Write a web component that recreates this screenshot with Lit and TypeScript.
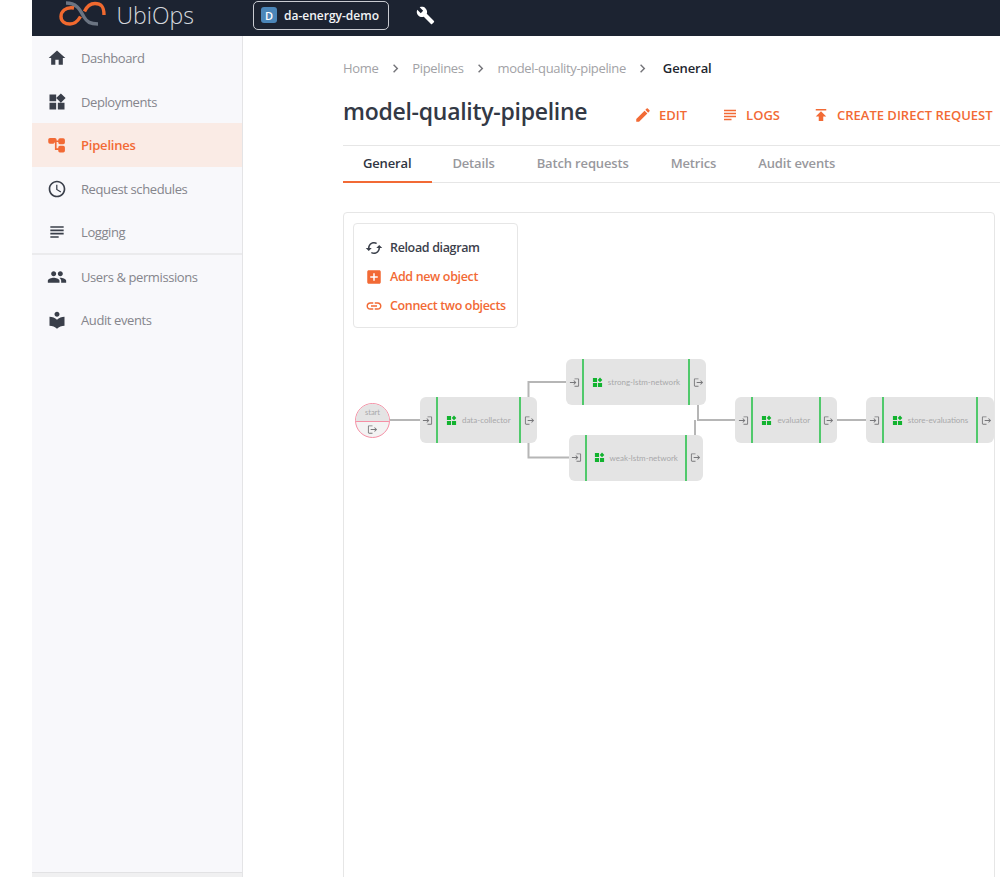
import { LitElement, html, css, svg } from "lit";
import { customElement } from "lit/decorators.js";

const P = {
  home: "M10 20v-6h4v6h5v-8h3L12 3 2 12h3v8z",
  deploy: "M13 13v8h8v-8h-8zM3 21h8v-8H3v8zM3 3v8h8V3H3zm13.66-1.31L11 7.34 16.66 13l5.66-5.66-5.66-5.65z",
  clock: "M11.99 2C6.47 2 2 6.48 2 12s4.47 10 9.99 10C17.52 22 22 17.52 22 12S17.52 2 11.99 2zM12 20c-4.42 0-8-3.58-8-8s3.58-8 8-8 8 3.58 8 8-3.58 8-8 8zm.5-13H11v6l5.25 3.15.75-1.23-4.5-2.67z",
  log: "M14 17H4v2h10v-2zm6-8H4v2h16V9zM4 15h16v-2H4v2zM4 5v2h16V5H4z",
  users: "M16 11c1.66 0 2.99-1.34 2.99-3S17.66 5 16 5c-1.66 0-3 1.34-3 3s1.34 3 3 3zm-8 0c1.66 0 2.99-1.34 2.99-3S9.66 5 8 5C6.34 5 5 6.34 5 8s1.34 3 3 3zm0 2c-2.33 0-7 1.17-7 3.5V19h14v-2.5c0-2.33-4.67-3.5-7-3.5zm8 0c-.29 0-.62.02-.97.05 1.16.84 1.97 1.97 1.97 3.45V19h6v-2.5c0-2.33-4.67-3.5-7-3.5z",
  audit: "M12 11.55C9.64 9.35 6.48 8 3 8v11c3.48 0 6.64 1.35 9 3.55 2.36-2.19 5.52-3.55 9-3.55V8c-3.48 0-6.64 1.35-9 3.55zM12 8c1.66 0 3-1.34 3-3s-1.34-3-3-3-3 1.34-3 3 1.34 3 3 3z",
  pipe: "M3.5 3.5h6a2 2 0 0 1 2 2v1h2v-.5a2 2 0 0 1 2-2h4a2 2 0 0 1 2 2v3a2 2 0 0 1-2 2h-4a2 2 0 0 1-2-2v-.5h-2v7.5h2v-1a2 2 0 0 1 2-2h4a2 2 0 0 1 2 2v4a2 2 0 0 1-2 2h-4a2 2 0 0 1-2-2v-1h-4V9h-.5a2 2 0 0 1-2 1.5h-3.5a2 2 0 0 1-2-2v-3a2 2 0 0 1 2-2z",
  edit: "M3 17.25V21h3.75L17.81 9.94l-3.75-3.75L3 17.25zM20.71 7.04c.39-.39.39-1.02 0-1.41l-2.34-2.34c-.39-.39-1.02-.39-1.41 0l-1.83 1.83 3.75 3.75 1.83-1.83z",
  publish: "M5 4v2h14V4H5zm0 10h4v6h6v-6h4l-7-7-7 7z",
  wrench: "M22.7 19l-9.1-9.1c.9-2.3.4-5-1.5-6.9-2-2-5-2.4-7.4-1.3L9 6 6 9 1.6 4.7C.4 7.1.9 10.1 2.9 12.1c1.9 1.9 4.6 2.4 6.9 1.5l9.1 9.1c.4.4 1 .4 1.4 0l2.3-2.3c.5-.4.5-1.1.1-1.4z",
  cached: "M19 8l-4 4h3c0 3.31-2.69 6-6 6-1.01 0-1.97-.25-2.8-.7l-1.46 1.46C8.97 19.54 10.43 20 12 20c4.42 0 8-3.58 8-8h3l-4-4zM6 12c0-3.31 2.69-6 6-6 1.01 0 1.97.25 2.8.7l1.46-1.46C15.03 4.46 13.57 4 12 4c-4.42 0-8 3.58-8 8H1l4 4 4-4H6z",
  add: "M19 3H5c-1.11 0-2 .9-2 2v14c0 1.1.89 2 2 2h14c1.1 0 2-.9 2-2V5c0-1.1-.9-2-2-2zm-2 10h-4v4h-2v-4H7v-2h4V7h2v4h4v2z",
  link: "M3.9 12c0-1.71 1.39-3.1 3.1-3.1h4V7H7c-2.76 0-5 2.24-5 5s2.24 5 5 5h4v-1.9H7c-1.71 0-3.1-1.39-3.1-3.1zM8 13h8v-2H8v2zm9-6h-4v1.9h4c1.71 0 3.1 1.39 3.1 3.1s-1.39 3.1-3.1 3.1h-4V17h4c2.76 0 5-2.24 5-5s-2.24-5-5-5z",
  chev: "M10 6L8.59 7.41 13.17 12l-4.58 4.59L10 18l6-6z",
  login: "M11 7L9.6 8.4l2.6 2.6H2v2h10.2l-2.6 2.6L11 17l5-5-5-5zm9 12h-8v2h8c1.1 0 2-.9 2-2V5c0-1.1-.9-2-2-2h-8v2h8v14z",
  logout: "M17 7l-1.41 1.41L18.17 11H8v2h10.17l-2.58 2.58L17 17l5-5zM4 5h8V3H4c-1.1 0-2 .9-2 2v14c0 1.1.9 2 2 2h8v-2H4V5z",
};

const icon = (d: string, cls = "") =>
  html`<svg class="ic ${cls}" viewBox="0 0 24 24" aria-hidden="true"><path d=${d} fill="currentColor"></path></svg>`;

const NAV_TOP = [
  { label: "Dashboard", d: P.home },
  { label: "Deployments", d: P.deploy },
  { label: "Pipelines", d: P.pipe, active: true },
  { label: "Request schedules", d: P.clock },
  { label: "Logging", d: P.log },
];
const NAV_BOTTOM = [
  { label: "Users & permissions", d: P.users },
  { label: "Audit events", d: P.audit },
];

const OX = 344;
const OY = 213;
const NODES = [
  { name: "data-collector", x: 419.5, y: 397, w: 117.5 },
  { name: "strong-lstm-network", x: 566, y: 359, w: 140 },
  { name: "weak-lstm-network", x: 568.5, y: 434.5, w: 134.5 },
  { name: "evaluator", x: 735, y: 397, w: 101.5 },
  { name: "store-evaluations", x: 866, y: 397, w: 128 },
];
const WIRES = [
  "M390 420H420",
  "M528.5 397V382H566",
  "M528.5 443V457.5H569",
  "M698 405V420H735",
  "M695 435V420",
  "M836 420H866",
];

@customElement("app-root")
export class AppRoot extends LitElement {
  static styles = css`
    :host {
      display: block;
      width: 1000px;
      height: 877px;
      overflow: hidden;
      background: #fff;
      font-family: "Open Sans", "Noto Sans", sans-serif;
      color: #2f3542;
    }
    .ic { width: 20px; height: 20px; display: block; flex: none; }
    .shell { display: grid; grid-template-columns: 1fr; height: 877px; margin-left: 32px; grid-template-rows: 36px 1fr; }
    .top { background: #1c2331; display: flex; align-items: center; color: #fff; }
    .logo { width: 50px; height: 36px; margin-left: 27px; display: block; }
    .brand { font-weight: 300; font-size: 23px; line-height: 26px; color: #d5d8de; margin: -6px 0 0 7.5px; width: 136.5px; }
    .ws { height: 29px; width: 136px; box-sizing: border-box; border: 1px solid #c8cbd1; border-radius: 5px; display: flex; align-items: center; padding-left: 7px; gap: 7px; font-size: 12px; font-weight: 600; margin-top: -6px; color: #f2f3f5; }
    .ws b { width: 16px; height: 16px; border-radius: 3px; background: #4b86b8; display: grid; place-items: center; font-size: 11px; font-weight: 600; color: #fff; }
    .wrench { width: 19px; height: 19px; margin-left: 27px; margin-top: -6px; color: #fff; }
    .wrench .ic { width: 19px; height: 19px; }
    .body { display: flex; min-height: 0; }
    .side { width: 211px; flex: none; box-sizing: border-box; background: #f8f8fb; border-right: 1px solid #e4e4e6; display: flex; flex-direction: column; }
    .foot { margin-top: auto; height: 4px; border-top: 1px solid #e2e2e4; background: #f0f0f1; }
    .nav { display: flex; flex-direction: column; }
    .nav + .nav { border-top: 2px solid #ebebed; margin-top: -1px; }
    .row { height: 43.5px; box-sizing: border-box; padding-top: 1px; display: flex; align-items: center; padding-left: 15px; gap: 14px; font-size: 13px; letter-spacing: -0.4px; color: #85858c; }
    .row .ic { color: #3a3f4a; }
    .row.on { background: #faebe5; color: #f26a35; font-weight: 600; letter-spacing: -0.2px; }
    .row.on .ic { color: #f26a35; }
    .main { flex: 1; min-width: 0; padding-left: 100px; }
    .crumbs { height: 64px; display: flex; align-items: center; font-size: 13px; letter-spacing: -0.35px; color: #a2a2a6; }
    .crumbs .ic { width: 17px; height: 17px; color: #75757a; margin: 0 8.5px; }
    .crumbs .cur { color: #22262e; font-weight: 600; letter-spacing: -0.1px; margin-left: 3px; }
    .head { height: 49px; display: flex; align-items: flex-start; margin-top: -4px; }
    h1 { margin: -1px 0 0; font-size: 23px; font-weight: 600; color: #333945; width: 291px; white-space: nowrap; letter-spacing: -0.27px; }
    .act { display: flex; align-items: center; color: #f26a35; font-size: 13px; font-weight: 600; gap: 7px; margin-top: 9.5px; text-transform: uppercase; white-space: nowrap; }
    .act .ic { width: 18px; height: 18px; }
    .act.edit { margin-right: 34px; }
    .act.logs { margin-right: 32px; }
    .tabs { height: 38px; box-sizing: border-box; border-top: 1px solid #e6e6e6; border-bottom: 1px solid #e6e6e6; display: flex; font-size: 13px; font-weight: 600; letter-spacing: -0.15px; color: #98989d; }
    .tab { padding: 0 21px 2px; display: flex; align-items: center; margin-bottom: -1px; border-bottom: 2px solid transparent; white-space: nowrap; }
    .tab.on { color: #2f3542; border-bottom-color: #f26a35; padding: 0 21px 2px 20px; margin-right: -1px; }
    .canvas { position: relative; margin-top: 29px; width: 652px; height: 700px; box-sizing: border-box; border: 1px solid #e6e6e6; border-radius: 4px; padding: 10px 9px; }
    .tools { width: 165px; height: 105px; box-sizing: border-box; border: 1px solid #e6e6e6; border-radius: 4px; background: #fff; padding: 11px 11px 9px; display: flex; flex-direction: column; justify-content: center; gap: 10px; font-size: 12.5px; font-weight: 600; letter-spacing: -0.35px; color: #f26a35; }
    .tool { display: flex; align-items: center; gap: 7px; height: 19px; white-space: nowrap; }
    .tool .ic { width: 18px; height: 18px; }
    .tool.dark { color: #3b404b; }
    .wires { position: absolute; left: 0; top: 0; width: 656px; height: 300px; overflow: visible; }
    .node { position: absolute; height: 46px; box-sizing: border-box; background: #e4e4e4; border-radius: 6px; display: flex; align-items: center; }
    .port { width: 16px; flex: none; height: 100%; display: grid; place-items: center; color: #77777a; }
    .port .ic { width: 11px; height: 11px; }
    .mid { flex: 1; min-width: 0; height: 100%; border-left: 2px solid #50c96b; border-right: 2px solid #50c96b; display: flex; align-items: center; justify-content: center; gap: 5px; font-family: Lato, sans-serif; font-weight: 400; font-size: 8px; color: #a8a8aa; white-space: nowrap; box-sizing: border-box; }
    .mid svg { width: 11px; height: 11px; flex: none; color: #12b32f; }
    .start { position: absolute; width: 35px; height: 35px; box-sizing: border-box; border: 1px solid #f590a5; border-radius: 50%; overflow: hidden; display: flex; flex-direction: column; background: #f3f3f3; }
    .start .a { height: 18px; box-sizing: border-box; background: #e4e4e4; border-bottom: 1.5px solid #f590a5; font-family: Lato, sans-serif; font-weight: 400; font-size: 7.5px; color: #a8a8aa; display: grid; place-items: center; }
    .start .b { flex: 1; display: grid; place-items: center; color: #77777a; }
    .start .b .ic { width: 11px; height: 11px; }
  `;

  private logo() {
    return html`<svg class="logo" viewBox="60 0 50 36" aria-hidden="true">
      <path d="M67 3C78 3 81 10 85 17C88 22 91 24 99 24" fill="none" stroke="#6b7482" stroke-width="3.4"></path>
      <path d="M75 8C66 6.5 62 12 62 16.5C62 21.5 66 24 71 24C77 24 79.5 20 81.5 16.5" fill="none" stroke="#f0692f" stroke-width="3.4"></path>
      <path d="M85.5 11.5C88 6 92 3.5 96 3.5C102 3.5 105 6 105 15" fill="none" stroke="#f0692f" stroke-width="3.4"></path>
    </svg>`;
  }

  private blocks() {
    return svg`<svg viewBox="0 0 24 24" aria-hidden="true"><path fill="currentColor" d=${"M13 13v9h9v-9h-9zM2 22h9v-9H2v9zM2 2v9h9V2H2zm15.5-1L12.5 6.5l5 5 5-5-5-5.5z"}></path></svg>`;
  }

  render() {
    return html`
      <div class="shell">
        <header class="top">
          ${this.logo()}
          <div class="brand">UbiOps</div>
          <div class="ws"><b>D</b>da-energy-demo</div>
          <div class="wrench">${icon(P.wrench)}</div>
        </header>
        <div class="body">
          <aside class="side">
            <nav class="nav">${NAV_TOP.map(n => html`<div class="row ${n.active ? "on" : ""}">${icon(n.d)}<span>${n.label}</span></div>`)}</nav>
            <nav class="nav">${NAV_BOTTOM.map(n => html`<div class="row">${icon(n.d)}<span>${n.label}</span></div>`)}</nav>
            <div class="foot"></div>
          </aside>
          <main class="main">
            <div class="crumbs">
              <span>Home</span>${icon(P.chev)}<span>Pipelines</span>${icon(P.chev)}<span>model-quality-pipeline</span>${icon(P.chev)}<span class="cur">General</span>
            </div>
            <div class="head">
              <h1>model-quality-pipeline</h1>
              <div class="act edit">${icon(P.edit)}Edit</div>
              <div class="act logs">${icon(P.log)}Logs</div>
              <div class="act">${icon(P.publish)}Create direct request</div>
            </div>
            <div class="tabs">
              <div class="tab on">General</div>
              <div class="tab">Details</div>
              <div class="tab">Batch requests</div>
              <div class="tab">Metrics</div>
              <div class="tab">Audit events</div>
            </div>
            <section class="canvas">
              <div class="tools">
                <div class="tool dark">${icon(P.cached)}Reload diagram</div>
                <div class="tool">${icon(P.add)}Add new object</div>
                <div class="tool">${icon(P.link)}Connect two objects</div>
              </div>
              <svg class="wires" viewBox="${OX} ${OY} 656 300" aria-hidden="true">
                ${WIRES.map(d => svg`<path d=${d} fill="none" stroke="#b6b6b6" stroke-width="2"></path>`)}
              </svg>
              <div class="start" style="left:${355 - OX}px;top:${403 - OY}px">
                <div class="a">start</div>
                <div class="b">${icon(P.logout)}</div>
              </div>
              ${NODES.map(n => html`
                <div class="node" style="left:${n.x - OX}px;top:${n.y - OY}px;width:${n.w}px">
                  <div class="port">${icon(P.login)}</div>
                  <div class="mid">${this.blocks()}<span>${n.name}</span></div>
                  <div class="port">${icon(P.logout)}</div>
                </div>`)}
            </section>
          </main>
        </div>
      </div>
    `;
  }
}
